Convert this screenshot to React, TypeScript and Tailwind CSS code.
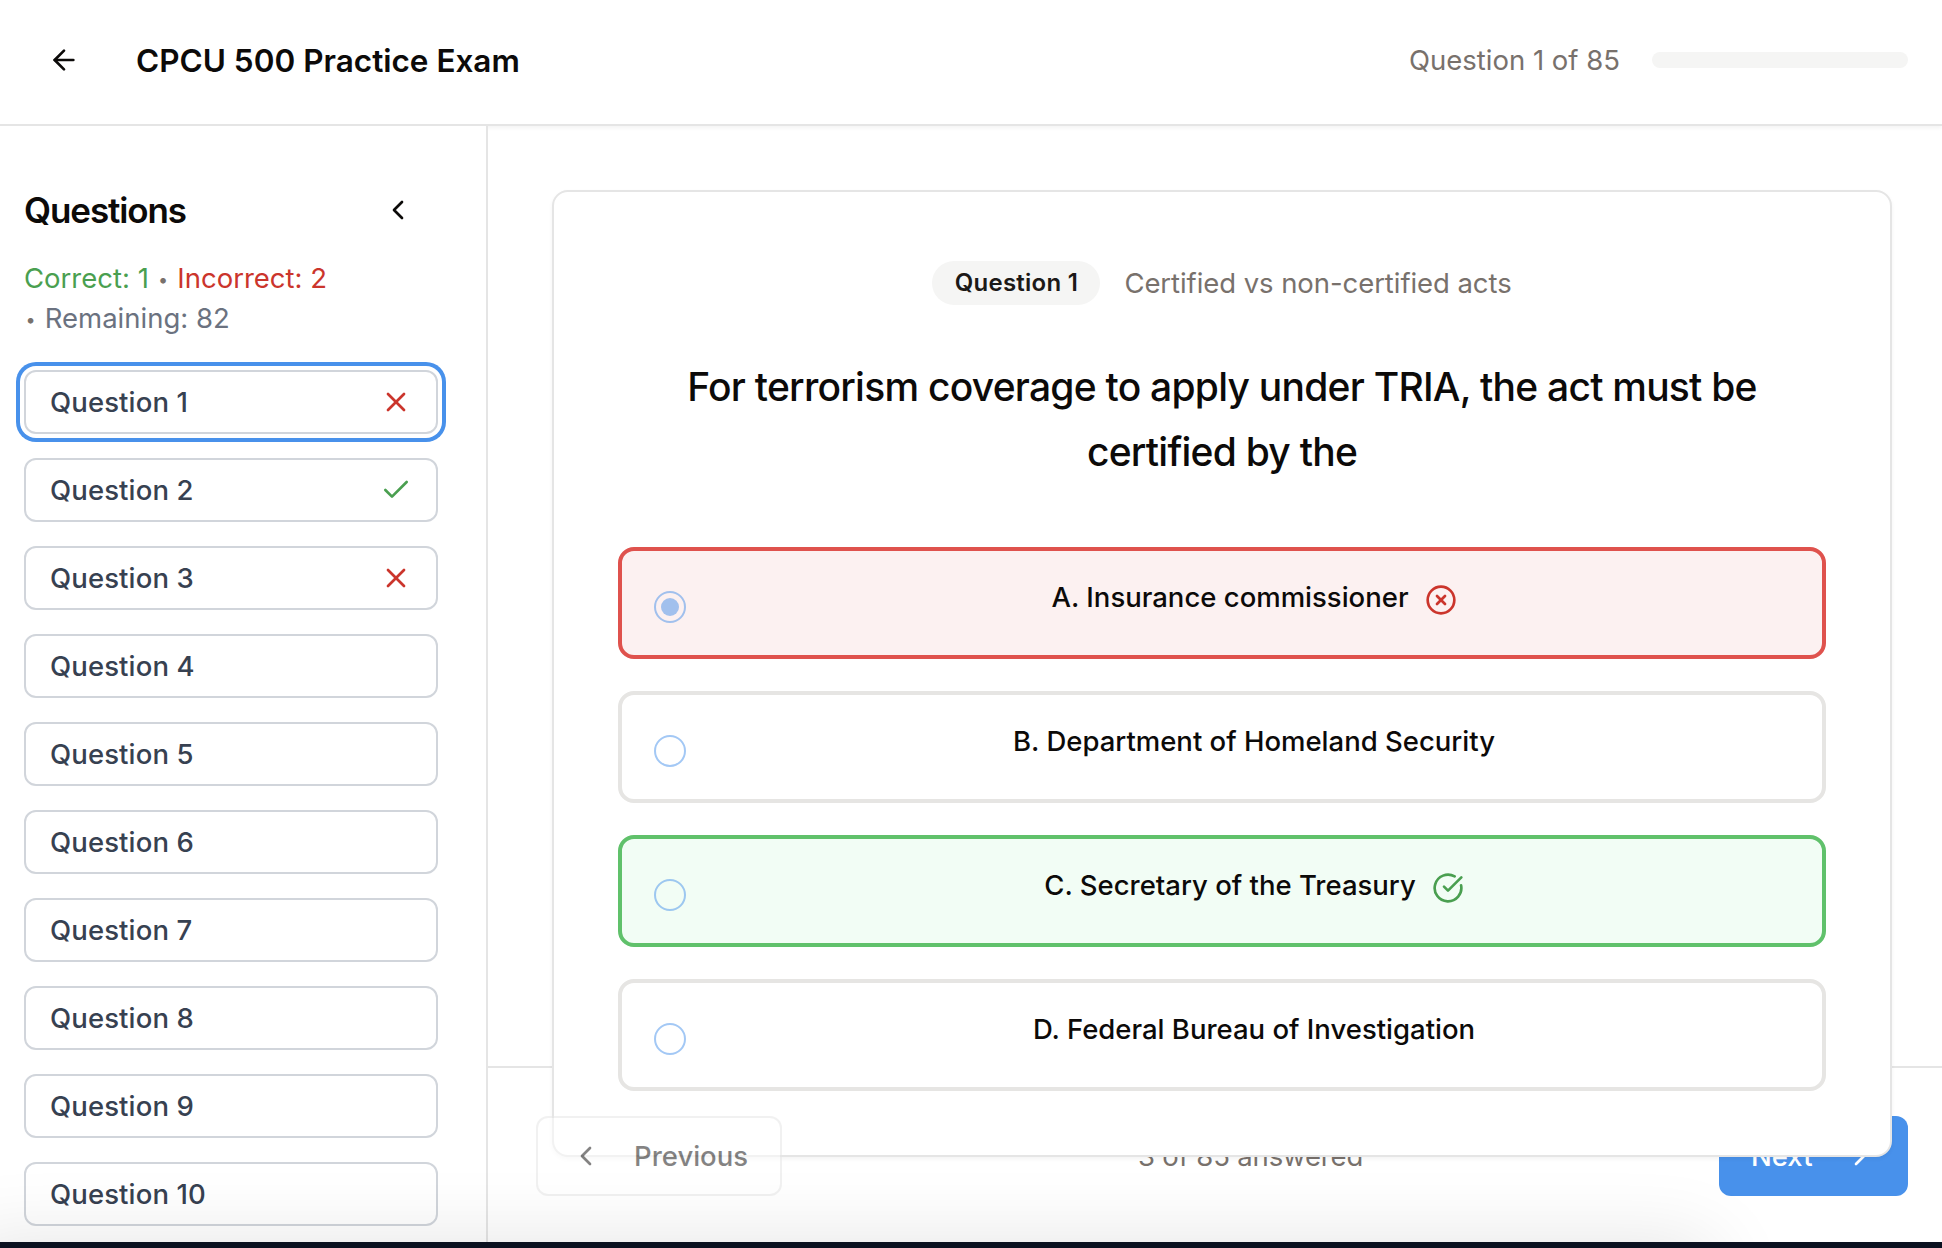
import { ArrowLeft, Check, ChevronLeft, ChevronRight, CircleCheckBig, CircleX, X } from "lucide-react";

type Result = "correct" | "incorrect" | null;

const questions: { n: number; result: Result }[] = [
  { n: 1, result: "incorrect" },
  { n: 2, result: "correct" },
  { n: 3, result: "incorrect" },
  { n: 4, result: null },
  { n: 5, result: null },
  { n: 6, result: null },
  { n: 7, result: null },
  { n: 8, result: null },
  { n: 9, result: null },
  { n: 10, result: null },
];

const options: { text: string; result: Result; selected: boolean }[] = [
  { text: "A. Insurance commissioner", result: "incorrect", selected: true },
  { text: "B. Department of Homeland Security", result: null, selected: false },
  { text: "C. Secretary of the Treasury", result: "correct", selected: false },
  { text: "D. Federal Bureau of Investigation", result: null, selected: false },
];

function Header() {
  return (
    <header className="flex h-[126px] shrink-0 items-center justify-between border-b-2 border-[#e5e5e5] bg-white pr-[34px] pb-1 pl-12 shadow-[0_2px_4px_0_rgba(0,0,0,0.05)]">
      <div className="flex items-center gap-14">
        <ArrowLeft className="size-8" />
        <h1 className="pt-0.5 text-[31.5px] leading-10 font-semibold">CPCU 500 Practice Exam</h1>
      </div>
      <div className="flex items-center gap-8">
        <span className="text-[27.5px] leading-10 text-[#78716c]">Question 1 of 85</span>
        <div className="h-4 w-64 rounded-full bg-[#f5f5f4]" />
      </div>
    </header>
  );
}

function QuestionButton({ n, result }: { n: number; result: Result }) {
  return (
    <button
      className={
        "flex h-16 w-full items-center justify-between rounded-xl border-2 border-[#d1d5db] bg-white px-6 text-[27.5px] leading-10 font-medium tracking-[0.12px] text-[#374151]" +
        (n === 1 ? " ring-4 ring-[#4891eb] ring-offset-4" : "")
      }
    >
      <span>Question {n}</span>
      {result === "incorrect" && <X className="size-8 text-[#cb352c]" />}
      {result === "correct" && <Check className="size-8 text-[#4a9f50]" />}
    </button>
  );
}

function Bullet() {
  return <span className="relative -top-0.5 inline-block w-[13px] text-center text-[18px] leading-none">•</span>;
}

function Sidebar() {
  return (
    <aside className="relative w-[488px] shrink-0 border-r-2 border-[#e5e5e5] bg-white pt-16 pr-12 pl-6">
      <div className="flex h-10 items-center justify-between pr-6">
        <h2 className="text-[35px] leading-10 font-semibold tracking-[-1.1px]">Questions</h2>
        <ChevronLeft className="size-8" />
      </div>
      <div className="mt-7 h-20 text-[27.5px] leading-10 whitespace-nowrap text-[#78716c]">
        <span className="text-[#4a9f50]">Correct: 1</span> <Bullet /> <span className="text-[#cb352c]">Incorrect: 2</span>
        <br />
        <Bullet /> <span className="text-[#6b7280]">Remaining: 82</span>
      </div>
      <div className="mt-8 flex flex-col gap-6">
        {questions.map((q) => (
          <QuestionButton key={q.n} n={q.n} result={q.result} />
        ))}
      </div>
    </aside>
  );
}

function Option({ text, result, selected }: { text: string; result: Result; selected: boolean }) {
  const tone =
    result === "incorrect"
      ? "border-[#df524d] bg-[#fcf1f1]"
      : result === "correct"
        ? "border-[#60c16b] bg-[#f2fdf5]"
        : "border-[#e6e5e3] bg-white";
  return (
    <div className={"flex h-28 items-start gap-8 rounded-2xl border-4 p-8 " + tone}>
      <span className="mt-2 flex size-8 shrink-0 items-center justify-center rounded-full border-2 border-[#4891eb] opacity-50">
        {selected && <span className="size-[18px] rounded-full bg-[#4891eb]" />}
      </span>
      <div className="flex flex-1 items-start justify-center gap-4 text-[27.5px] leading-7 font-medium">
        <span>{text}</span>
        {result === "incorrect" && <CircleX className="mt-px size-8 text-[#cb352c]" />}
        {result === "correct" && <CircleCheckBig className="mt-px size-8 text-[#4a9f50]" />}
      </div>
    </div>
  );
}

function QuestionCard() {
  return (
    <section className="relative z-10 rounded-2xl border-2 border-[#e5e5e5] bg-white px-16 pt-[69px] pb-16 shadow-[0_2px_4px_0_rgba(0,0,0,0.05)]">
      <div className="flex h-11 items-center justify-center gap-6">
        <span className="flex h-11 w-[168px] items-center justify-center rounded-full bg-[#f5f5f4] text-[24px] leading-8 font-semibold tracking-[0.25px] text-[#1c1917]">
          Question 1
        </span>
        <span className="text-[27.5px] leading-10 tracking-[-0.07px] text-[#78716c]">Certified vs non-certified acts</span>
      </div>
      <h3 className="mt-[49px] text-center text-[39px] leading-[65px] font-medium tracking-[-0.76px]">
        For terrorism coverage to apply under TRIA, the act must be
        <br />
        certified by the
      </h3>
      <div className="mt-[63px] flex flex-col gap-8">
        {options.map((o) => (
          <Option key={o.text} {...o} />
        ))}
      </div>
    </section>
  );
}

function Footer() {
  return (
    <footer className="flex h-[176px] shrink-0 items-start justify-between border-t-2 border-[#e5e5e5] bg-white pt-12 pr-[34px] pl-12 text-[27.5px] leading-10">
      <button className="relative z-20 flex h-20 w-[246px] items-center gap-8 rounded-xl border-2 border-[#e5e5e5] bg-white px-8 font-medium opacity-50">
        <ChevronLeft className="size-8 shrink-0" />
        Previous
      </button>
      <span className="flex h-20 items-center tracking-[-0.15px] text-[#78716c]">3 of 85 answered</span>
      <button className="flex h-20 w-[189px] items-center justify-between rounded-xl bg-[#4891eb] px-8 font-medium text-white">
        Next
        <ChevronRight className="size-8 shrink-0" />
      </button>
    </footer>
  );
}

export default function App() {
  return (
    <div className="relative flex h-[1248px] w-[1942px] flex-col overflow-hidden bg-white font-[Inter,sans-serif] text-[#0c0a09]">
      <Header />
      <div className="flex h-[1116px] shrink-0">
        <Sidebar />
        <div className="flex min-w-0 flex-1 flex-col">
          <main className="h-[940px] shrink-0 pt-16 pr-[50px] pl-16">
            <QuestionCard />
          </main>
          <Footer />
        </div>
      </div>
      <div className="h-1.5 shrink-0 bg-[#0b1120]" />
      {/* soft shade cast upward by the bottom edge */}
      <div className="pointer-events-none absolute inset-x-0 bottom-1.5 z-30 h-24 overflow-hidden">
        <div className="absolute top-full right-[230px] -left-10 h-40 shadow-[0_0_80px_0_rgba(0,0,0,0.11)]" />
      </div>
    </div>
  );
}
